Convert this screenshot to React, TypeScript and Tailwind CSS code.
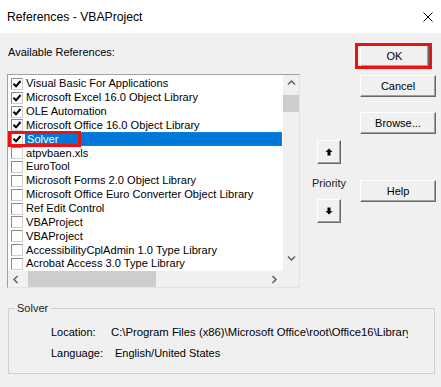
import React from "react";

const items: { label: string; checked: boolean }[] = [
  { label: "Visual Basic For Applications", checked: true },
  { label: "Microsoft Excel 16.0 Object Library", checked: true },
  { label: "OLE Automation", checked: true },
  { label: "Microsoft Office 16.0 Object Library", checked: true },
  { label: "Solver", checked: true },
  { label: "atpvbaen.xls", checked: false },
  { label: "EuroTool", checked: false },
  { label: "Microsoft Forms 2.0 Object Library", checked: false },
  { label: "Microsoft Office Euro Converter Object Library", checked: false },
  { label: "Ref Edit Control", checked: false },
  { label: "VBAProject", checked: false },
  { label: "VBAProject", checked: false },
  { label: "AccessibilityCplAdmin 1.0 Type Library", checked: false },
  { label: "Acrobat Access 3.0 Type Library", checked: false },
];

function Chevron({ dir }: { dir: "up" | "down" | "left" | "right" }) {
  const d =
    dir === "up"
      ? "M1 5.5 L4.5 2 L8 5.5"
      : dir === "down"
      ? "M1 2.5 L4.5 6 L8 2.5"
      : dir === "left"
      ? "M5.5 1 L2 4.5 L5.5 8"
      : "M2.5 1 L6 4.5 L2.5 8";
  return (
    <svg width="9" height="9" viewBox="0 0 9 9">
      <path d={d} fill="none" stroke="#606060" strokeWidth="1.5" />
    </svg>
  );
}

function CheckBox({ checked }: { checked: boolean }) {
  return (
    <div className="w-[12px] h-[12px] bg-white border border-t-[#8a8a8a] border-l-[#8a8a8a] border-r-[#cfcfcf] border-b-[#cfcfcf] flex items-center justify-center shrink-0">
      {checked && (
        <svg width="10" height="10" viewBox="0 0 10 10">
          <path d="M1.5 4.8 L4 7.3 L8.5 2" fill="none" stroke="#000" strokeWidth="2" />
        </svg>
      )}
    </div>
  );
}

function Btn({ label, className = "" }: { label: string; className?: string }) {
  return (
    <div
      className={
        "h-[22px] flex items-center justify-center bg-[#f0f0f0] border border-t-white border-l-white border-r-[#696969] border-b-[#696969] shadow-[inset_-1px_-1px_0_#a0a0a0] text-[11px] text-black " +
        className
      }
    >
      {label}
    </div>
  );
}

function ArrowBtn({ up }: { up: boolean }) {
  return (
    <div className="w-[24px] h-[24px] flex items-center justify-center bg-[#f0f0f0] border border-t-white border-l-white border-r-[#696969] border-b-[#696969] shadow-[inset_-1px_-1px_0_#a0a0a0]">
      <svg width="8" height="8" viewBox="0 0 8 8">
        {up ? (
          <path d="M4 0.5 L7.5 4 H5.5 V7.5 H2.5 V4 H0.5 Z" fill="#000" />
        ) : (
          <path d="M4 7.5 L7.5 4 H5.5 V0.5 H2.5 V4 H0.5 Z" fill="#000" />
        )}
      </svg>
    </div>
  );
}

export default function App() {
  return (
    <div className="w-[441px] h-[387px] bg-[#f0f0f0] flex flex-col overflow-hidden text-[11px] text-black font-['Liberation_Sans',Arial,sans-serif]">
      {/* Title bar */}
      <div className="h-[33px] bg-white flex items-center justify-between pl-[7px] pr-[8px] shrink-0">
        <span className="text-[12.2px] leading-[16px]">References - VBAProject</span>
        <svg width="10" height="10" viewBox="0 0 10 10">
          <path d="M0.5 0.5 L9.5 9.5 M9.5 0.5 L0.5 9.5" stroke="#000" strokeWidth="1" />
        </svg>
      </div>

      {/* Body */}
      <div className="flex h-[255px] shrink-0">
        {/* Left column */}
        <div className="w-[300px] pl-[7px] pt-[13px] flex flex-col">
          <div className="pl-[1px] leading-[13px] h-[13px]">Available References:</div>
          <div className="mt-[15px] w-[293px] h-[214px] bg-white border border-t-[#a0a0a0] border-l-[#a0a0a0] border-r-[#e3e3e3] border-b-[#e3e3e3] flex flex-col">
            <div className="flex flex-1 min-h-0">
              <div className="flex-1 pt-[2px] overflow-hidden text-[11.1px]">
                {items.map((it, i) => {
                  const sel = it.label === "Solver";
                  return (
                    <div key={i} className="relative h-[13.85px] flex items-center pl-[3px]">
                      <CheckBox checked={it.checked} />
                      <div
                        className={
                          "ml-[2px] h-full flex items-center pl-[1px] whitespace-nowrap leading-[13px] " +
                          (sel
                            ? "flex-1 mr-[1px] bg-[#0078d7] text-white border border-dotted border-[#8a6d3f]"
                            : "")
                        }
                      >
                        {it.label}
                      </div>
                      {sel && (
                        <div className="absolute left-0 top-[-1.5px] w-[73px] h-[16.5px] border-[3px] border-[#ee1111] pointer-events-none" />
                      )}
                    </div>
                  );
                })}
              </div>
              {/* vertical scrollbar */}
              <div className="w-[16px] bg-[#f0f0f0] flex flex-col">
                <div className="h-[17px] flex items-center justify-center">
                  <Chevron dir="up" />
                </div>
                <div className="mt-[3px] h-[17px] bg-[#cdcdcd]" />
                <div className="flex-1" />
                <div className="h-[17px] flex items-center justify-center mb-[4px]">
                  <Chevron dir="down" />
                </div>
              </div>
            </div>
            <div className="flex h-[16px]">
              <div className="flex-1 bg-[#f0f0f0] flex">
                <div className="w-[17px] flex items-center justify-center">
                  <Chevron dir="left" />
                </div>
                <div className="ml-[3px] w-[128px] bg-[#cdcdcd]" />
                <div className="flex-1" />
                <div className="w-[17px] flex items-center justify-center">
                  <Chevron dir="right" />
                </div>
              </div>
              <div className="w-[16px] bg-[#f0f0f0]" />
            </div>
          </div>
        </div>

        {/* Middle column */}
        <div className="w-[58px] flex flex-col items-center pt-[107px]">
          <ArrowBtn up />
          <div className="mt-[12px] h-[14px] leading-[14px] text-[#222]">Priority</div>
          <div className="mt-[9px]">
            <ArrowBtn up={false} />
          </div>
        </div>

        {/* Right column */}
        <div className="ml-[2px] w-[76px] flex flex-col pt-[12px]">
          <div className="relative w-[69px]">
            <Btn label="OK" />
            <div className="absolute left-[-5px] top-[-2px] w-[77px] h-[26px] border-[3px] border-[#ee1111] pointer-events-none" />
          </div>
          <Btn label="Cancel" className="mt-[8px]" />
          <Btn label="Browse..." className="mt-[15px]" />
          <Btn label="Help" className="mt-[46px]" />
        </div>
      </div>

      {/* Group box */}
      <div className="relative mt-[20px] ml-[8px] w-[427px] h-[66px] border border-[#d0d0d0] shrink-0 pt-[16px] flex flex-col gap-[7px]">
        <span className="absolute left-[6px] top-[-7.5px] px-[2px] bg-[#f0f0f0] leading-[13px] text-[#222]">
          Solver
        </span>
        <div className="flex h-[14px] leading-[14px] pl-[42px]">
          <span className="w-[60px] shrink-0">Location:</span>
          <span className="w-[297px] overflow-hidden whitespace-nowrap text-[11.3px]">
            C:\Program Files (x86)\Microsoft Office\root\Office16\Library
          </span>
        </div>
        <div className="flex h-[14px] leading-[14px] pl-[42px]">
          <span className="w-[64px] shrink-0">Language:</span>
          <span className="whitespace-nowrap">English/United States</span>
        </div>
      </div>
    </div>
  );
}
